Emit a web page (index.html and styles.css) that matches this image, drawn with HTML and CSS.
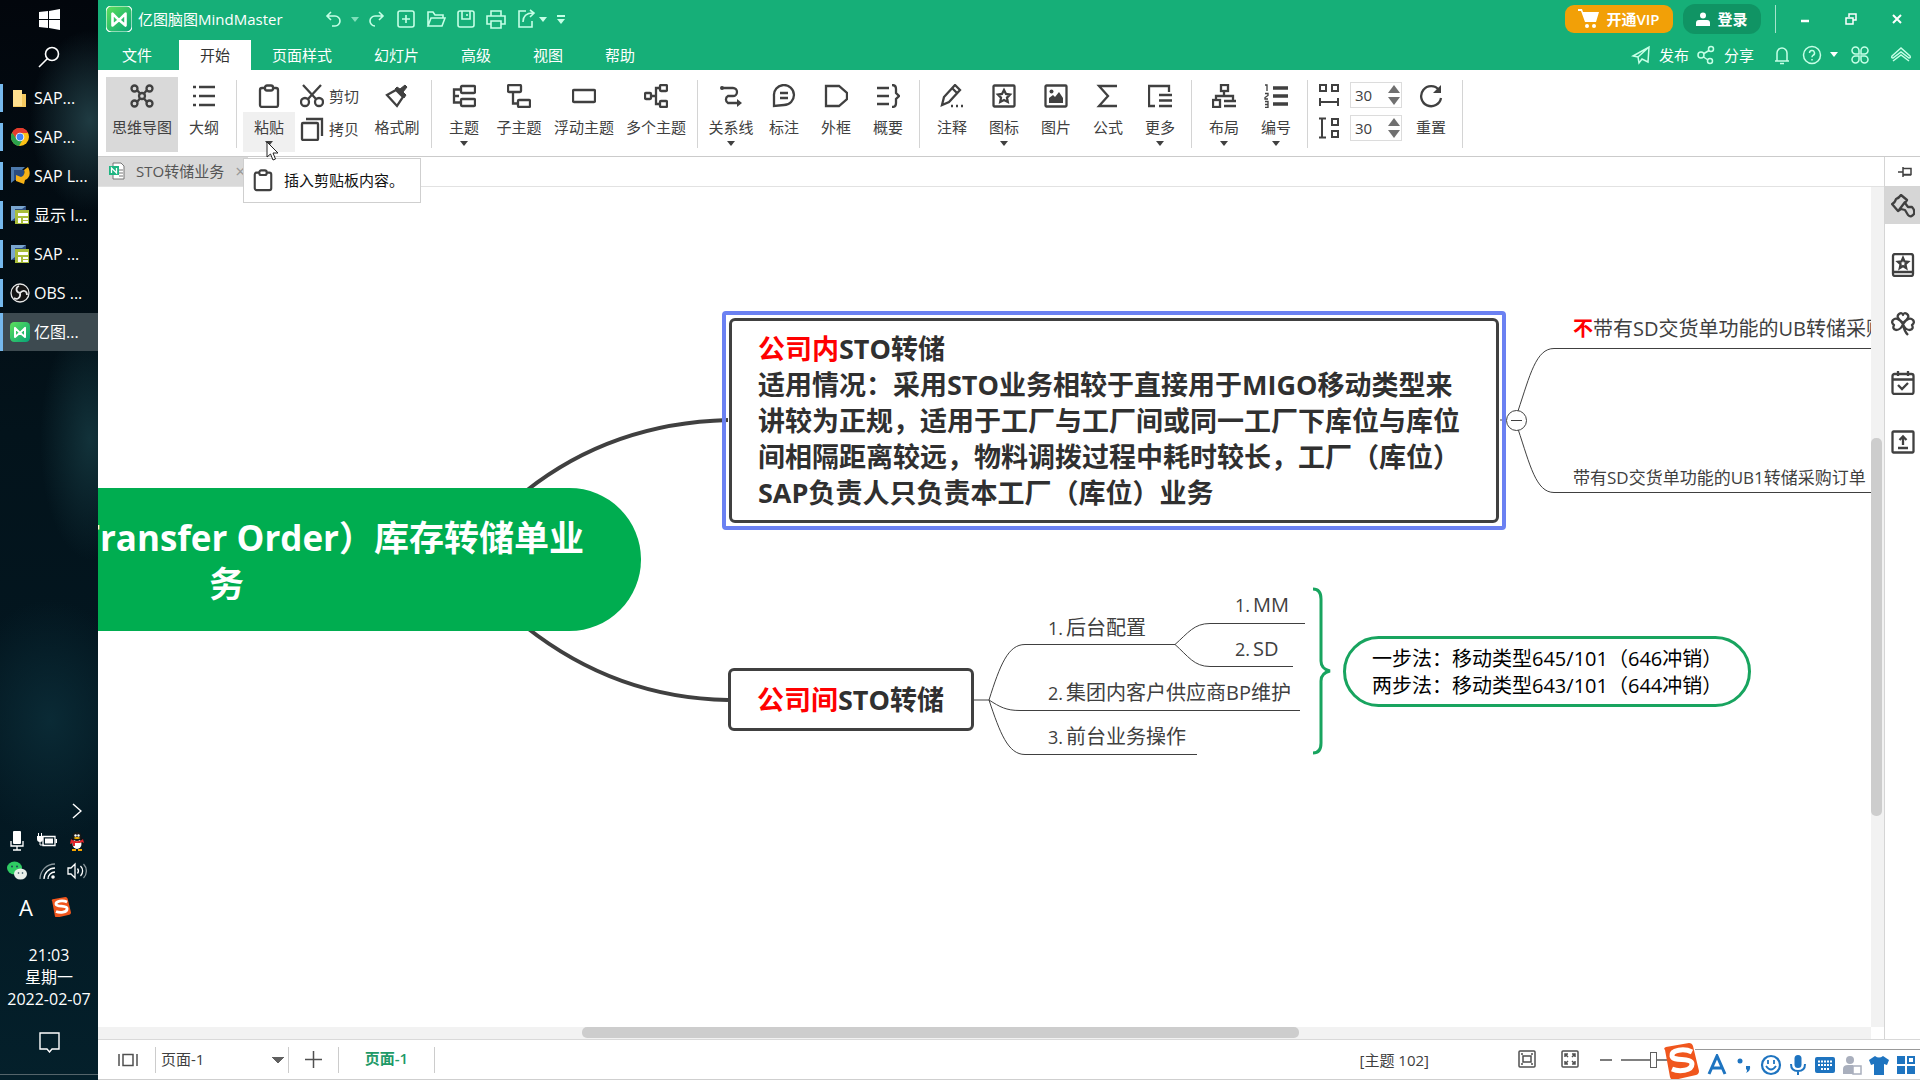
FILE: index.html
```html
<!DOCTYPE html>
<html lang="zh-CN">
<head>
<meta charset="utf-8">
<title>亿图脑图MindMaster</title>
<meta name="viewport" content="width=device-width, initial-scale=1">
<link rel="stylesheet" href="styles.css">
</head>
<body>
<svg class="defs" aria-hidden="true">
  <defs>
    <linearGradient id="logo-bg" x1="0" y1="0" x2="1" y2="1"><stop offset="0" stop-color="#5ee05a"/><stop offset="1" stop-color="#05a378"/></linearGradient>
    <symbol id="logo" viewBox="0 0 24 24"><rect width="24" height="24" rx="5" fill="url(#logo-bg)"/><path d="M6 7v11l6-5 6 5V7l-6 6z" fill="none" stroke="#fff" stroke-width="2.4" stroke-linejoin="round"/></symbol>
    <symbol id="sogou" viewBox="0 0 36 36"><path d="M2 7q-2-2 1-3L26 0q3 0 4 3l6 25q0 3-3 4l-22 5q-3 0-4-3z" fill="#f0561d"/><path d="M29 9C21 5 8 7 9 13c1 6 20 1 20 8 0 7-13 8-20 5" fill="none" stroke="#fff" stroke-width="5"/></symbol>
    <symbol id="clipboard" viewBox="0 0 24 24"><rect x="3" y="4" width="18" height="19" rx="2"/><rect x="8" y="1.500" width="8" height="5" rx="2" fill="#fff"/></symbol>
    <symbol id="sapgui" viewBox="0 0 20 20"><rect x="1" y="1" width="15" height="15" fill="#2c4a7c"/><path d="M1 1h15l-4 3H5v9l-4 3z" fill="#7aa6cf"/><rect x="5" y="5" width="14" height="14" fill="#a9bd3a"/><path d="M8 8h10v3H8zM8 13h3v5H8zM13 13h5v2h-5zM13 16h5v2h-5z" fill="#fff"/></symbol>
  </defs>
</svg>
<div class="desktop">
  <nav class="taskbar" aria-label="任务栏">
    <button class="tb-btn" aria-label="开始菜单"><svg width="21" height="21" viewBox="0 0 21 21" fill="#fff"><path d="M0 3l9-1v8H0zM10 2l11-2v10H10zM0 11h9v8l-9-1zM10 11h11v10l-11-2z"/></svg></button>
    <button class="tb-btn" aria-label="搜索"><svg width="22" height="22" viewBox="0 0 22 22" fill="none" stroke="#fff" stroke-width="1.600"><circle cx="14" cy="8" r="6.500"/><path d="M9.500 12.500L1 21"/></svg></button>
    <div class="tasks">
      <button class="task"><svg width="20" height="20" viewBox="0 0 20 20"><path d="M3 2h9v4h4v13H3z" fill="#f5c95f"/><path d="M3 2h9v16H3z" fill="#ffe08f"/></svg>SAP...</button>
      <button class="task"><svg width="20" height="20" viewBox="0 0 20 20"><circle cx="10" cy="10" r="9" fill="#fbc116"/><path d="M2.200 5.500A9 9 0 0 1 18 6H10z" fill="#e33b2e"/><path d="M2.200 5.500A9 9 0 0 0 9 19l4-7-6 0z" fill="#2ba24c"/><path d="M2.200 5.500L6.500 12 10 6h8A9 9 0 0 0 2.200 5.500z" fill="#e33b2e"/><circle cx="10" cy="10" r="4.300" fill="#fff"/><circle cx="10" cy="10" r="3.400" fill="#4285f4"/></svg>SAP...</button>
      <button class="task"><svg width="20" height="20" viewBox="0 0 20 20"><path d="M1 1h14l-4 4H6v8l-5 4z" fill="#4c79ac"/><rect x="4" y="4" width="10" height="10" fill="#2a4c80"/><path d="M6 9l5 2c3-1 4-4 3-7l4-3c3 6 2 11-3 13l-1 4-8-3z" fill="#f7b217"/></svg>SAP L...</button>
      <button class="task"><svg width="20" height="20"><use href="#sapgui"/></svg>显示 I...</button>
      <button class="task"><svg width="20" height="20"><use href="#sapgui"/></svg>SAP ...</button>
      <button class="task"><svg width="20" height="20" viewBox="0 0 20 20" fill="none" stroke="#e8e8e8"><circle cx="10" cy="10" r="9" fill="#141414" stroke-width="1.300"/><path d="M10 10C5 9 6 4 9 3M10 10c3-4 7-2 7 2M10 10c1 5-3 7-6 5" stroke-width="1.800"/></svg>OBS ...</button>
      <button class="task active"><svg width="20" height="20"><use href="#logo"/></svg>亿图...</button>
    </div>
    <div class="tray">
      <button class="tray-more" aria-label="显示隐藏的图标"><svg width="10" height="16" viewBox="0 0 10 16" fill="none" stroke="#fff" stroke-width="1.500"><path d="M1 1l8 7-8 7"/></svg></button>
      <div class="tray-grid">
        <svg viewBox="0 0 20 20" fill="#fff"><rect x="6" y="0" width="8" height="13" rx="1"/><path d="M4 10v5h12v-5M10 15v4M6 19h8" fill="none" stroke="#fff" stroke-width="1.300"/></svg>
        <svg viewBox="0 0 20 20" fill="#fff"><path d="M6 5.500h12v9H6z" fill="none" stroke="#fff" stroke-width="1.300"/><path d="M8 7.500h8v5H8zM18.500 8h1.500v4h-1.500zM0 5h6v3a3 3 0 0 1-6 0zM1 2h1v3H1zM4 2h1v3H4z"/><path d="M3 10v4h4" fill="none" stroke="#fff"/></svg>
        <svg viewBox="0 0 20 20"><ellipse cx="10" cy="11" rx="6" ry="7" fill="#111"/><ellipse cx="10" cy="13" rx="4.500" ry="5" fill="#fff"/><circle cx="10" cy="5.500" r="4.500" fill="#181818"/><circle cx="8.500" cy="4.500" r="1.200" fill="#fff"/><circle cx="11.500" cy="4.500" r="1.200" fill="#fff"/><ellipse cx="10" cy="7" rx="3" ry="1" fill="#f7b500"/><path d="M4 8c3 3 9 3 12 0l1 4-2-1-2 1H8v3H6v-3l-3 1z" fill="#e2242b"/><path d="M5 18h4v2H5zM11 18h4v2h-4z" fill="#f7a500"/></svg>
        <svg viewBox="0 0 20 20"><ellipse cx="7.500" cy="7" rx="7.500" ry="6.500" fill="#2fcb63"/><ellipse cx="13.500" cy="13" rx="6.500" ry="5.500" fill="#e9efe9"/><g fill="#245"><circle cx="5" cy="5.500" r="1"/><circle cx="10" cy="5.500" r="1"/><circle cx="11.500" cy="12" r=".8"/><circle cx="15.500" cy="12" r=".8"/></g></svg>
        <svg viewBox="0 0 20 20" fill="none" stroke="#fff" stroke-width="1.300"><path d="M3 18A15 15 0 0 1 18 3" stroke="#8a969b"/><path d="M7 18A11 11 0 0 1 18 7M11 18a7 7 0 0 1 7-7"/><circle cx="16" cy="16" r="1.800" fill="#fff" stroke="none"/></svg>
        <svg viewBox="0 0 20 20" fill="none" stroke="#fff" stroke-width="1.300"><path d="M1 7h3l4-4v14l-4-4H1zM10.500 7.500a4 4 0 0 1 0 5M13.500 5a7 7 0 0 1 0 10"/><path d="M16.500 3a10 10 0 0 1 0 14" stroke="#8a969b"/></svg>
      </div>
      <div class="tray-ime"><span>A</span><svg width="20" height="20"><use href="#sogou"/></svg></div>
      <div class="clock"><span>21:03</span><span>星期一</span><span>2022-02-07</span></div>
      <button class="tb-note" aria-label="通知"><svg width="21" height="21" viewBox="0 0 21 21" fill="none" stroke="#fff" stroke-width="1.400"><path d="M1 1h19v16h-7l-2.500 3L8 17H1z"/></svg></button>
    </div>
  </nav>

  <div class="app">
    <header class="head">
      <div class="title-row">
        <svg class="app-logo" width="26" height="26"><use href="#logo"/></svg>
        <h1>亿图脑图MindMaster</h1>
        <div class="quick">
          <button aria-label="撤销"><svg viewBox="0 0 20 20"><path d="M7 3L3 7l4 4M3 7h8a5 5 0 0 1 0 10H8"/></svg></button>
          <button class="slim dim" aria-label="撤销列表"><i class="caret"></i></button>
          <button aria-label="重做"><svg viewBox="0 0 20 20"><path d="M13 3l4 4-4 4M17 7H9a5 5 0 0 0 0 10"/></svg></button>
          <button aria-label="新建"><svg viewBox="0 0 20 20"><rect x="2" y="2" width="16" height="16" rx="2"/><path d="M10 6v8M6 10h8"/></svg></button>
          <button aria-label="打开"><svg viewBox="0 0 20 20"><path d="M2 17V3h5l2 3h8v3M2 17h14l3-8H5z"/></svg></button>
          <button aria-label="保存"><svg viewBox="0 0 20 20"><rect x="2" y="2" width="16" height="16" rx="2"/><path d="M6 2v8h8V2M11 5v2"/></svg></button>
          <button aria-label="打印"><svg viewBox="0 0 20 20"><path d="M5 7V2h10v5M5 15H1V7h18v8h-4M5 12h10v7H5z"/></svg></button>
          <button aria-label="导出"><svg viewBox="0 0 20 20"><path d="M10 2H3v16h13v-6M7 13c0-6 4-9 10-9M14 1l4 3-4 4"/></svg></button>
          <button class="slim near" aria-label="导出列表"><i class="caret"></i></button>
          <button class="slim more" aria-label="自定义"><i class="bar"></i><i class="caret"></i></button>
        </div>
        <div class="window-side">
          <button class="vip"><svg width="22" height="22" viewBox="0 0 22 22" fill="#fff"><path d="M0 1h4l1 3h16l-3 10H7L3 3H0z"/><circle cx="9" cy="18" r="2"/><circle cx="16" cy="18" r="2"/></svg>开通VIP</button>
          <button class="login"><svg width="14" height="14" viewBox="0 0 14 14" fill="#fff"><circle cx="7" cy="3.500" r="3"/><path d="M0 14v-3q0-3 3-3h8q3 0 3 3v3z"/></svg>登录</button>
          <div class="win-ctl">
            <button aria-label="最小化"><svg viewBox="0 0 12 12"><path d="M2 8h8" stroke-width="2.500"/></svg></button>
            <button aria-label="还原"><svg viewBox="0 0 12 12"><path d="M4 4V1h7v6H8M1 5h7v6H1z" stroke-width="1.500"/></svg></button>
            <button aria-label="关闭"><svg viewBox="0 0 12 12"><path d="M2 2l8 8M10 2l-8 8" stroke-width="2"/></svg></button>
          </div>
        </div>
      </div>
      <div class="menu-row">
        <nav class="menu">
          <button class="file">文件</button><button class="on">开始</button><button>页面样式</button><button>幻灯片</button><button>高级</button><button>视图</button><button>帮助</button>
        </nav>
        <div class="actions">
          <button><svg viewBox="0 0 20 20"><path d="M2 11L18 2l-1 15-6-3-3 4-1-6zM2 11l5 1 11-10"/></svg>发布</button>
          <button><svg viewBox="0 0 20 20"><circle cx="5" cy="10" r="3"/><circle cx="15" cy="4" r="2.500"/><circle cx="14" cy="16" r="2.500"/><path d="M8 8.500l5-3M7.500 12l4.500 3"/></svg>分享</button>
          <button class="bell" aria-label="通知"><svg viewBox="0 0 20 20"><path d="M3 16h14M5 16V8a5 5 0 0 1 10 0v8M8 18.500h4"/></svg></button>
          <button class="help" aria-label="帮助"><svg viewBox="0 0 20 20"><circle cx="10" cy="10" r="8.500"/><path d="M7.500 8a2.500 2.500 0 1 1 3.500 2.300q-1 .5-1 2M10 14v1.500"/></svg><i class="caret"></i></button>
          <button class="grid" aria-label="应用"><svg viewBox="0 0 20 20"><path d="M9 9H5.500A3.500 3.500 0 1 1 9 5.500zM11 9V5.500A3.500 3.500 0 1 1 14.500 9zM9 11v3.500A3.500 3.500 0 1 1 5.500 11zM11 11h3.500a3.500 3.500 0 1 1-3.500 3.500z"/></svg></button>
          <button class="fold" aria-label="收起功能区"><svg viewBox="0 0 22 20"><path d="M2 11l9-8 9 8q1 2-1 2l-8-6-8 6q-2 0-1-2zM3 16l8-6 8 6"/></svg></button>
        </div>
      </div>
    </header>

    <section class="ribbon" aria-label="功能区">
      <div class="group first">
        <button class="tool wide picked"><svg viewBox="0 0 24 24"><circle cx="4.500" cy="4.500" r="3"/><circle cx="19.500" cy="4.500" r="3"/><circle cx="4.500" cy="19.500" r="3"/><circle cx="19.500" cy="19.500" r="3"/><circle cx="12" cy="12" r="3"/><path d="M7 6l3 3.500M17 6l-3 3.500M7 18l3-3.500M17 18l-3-3.500"/></svg>思维导图</button>
        <button class="tool"><svg viewBox="0 0 24 24"><path d="M7 3h16M7 12h16M7 21h16M1 3h3M1 12h3M1 21h3"/></svg>大纲</button>
      </div>
      <div class="group">
        <button class="tool paste"><svg><use href="#clipboard"/></svg><span>粘贴</span><i class="caret"></i></button>
        <div class="stack">
          <button><svg viewBox="0 0 24 24"><circle cx="5" cy="18" r="4"/><circle cx="19" cy="18" r="4"/><path d="M3 1l13 14M21 1L8 15"/></svg>剪切</button>
          <button><svg viewBox="0 0 24 24"><rect x="2" y="6" width="16" height="17" rx="1"/><path d="M6 2h16v17"/></svg>拷贝</button>
        </div>
        <button class="tool mid"><svg viewBox="0 0 24 24"><path d="M11 6l7 7-6 9L2 11z"/><path d="M10 5l9 9 2-3-3-3 4-5-2-2-5 4-3-2z" fill="#404040" stroke-width="1"/></svg>格式刷</button>
      </div>
      <div class="group">
        <button class="tool"><svg viewBox="0 0 24 24"><rect x="9" y="2" width="14" height="7" rx="1"/><rect x="9" y="15" width="14" height="7" rx="1"/><path d="M9 5.500H2v13h7M2 12h5"/></svg>主题<i class="caret"></i></button>
        <button class="tool mid"><svg viewBox="0 0 24 24"><rect x="1" y="1" width="13" height="7" rx="1"/><rect x="11" y="16" width="12" height="7" rx="1"/><path d="M6 8v11.500h5"/></svg>子主题</button>
        <button class="tool wide"><svg viewBox="0 0 24 24"><rect x="1" y="6" width="22" height="12" rx="1"/></svg>浮动主题</button>
        <button class="tool wide"><svg viewBox="0 0 24 24"><rect x="1" y="9" width="6" height="6" rx="1"/><rect x="16" y="1" width="7" height="6" rx="1"/><rect x="16" y="17" width="7" height="6" rx="1"/><path d="M16 4h-4v16h4M7 12h5"/></svg>多个主题</button>
      </div>
      <div class="group">
        <button class="tool mid54"><svg viewBox="0 0 24 24"><path d="M2 4h12a4 4 0 0 1 0 8H9a4 4 0 0 0 0 7h11"/><circle cx="3" cy="4" r="2" fill="#404040" stroke="none"/><path d="M18 15l5 4-5 4z" fill="#404040" stroke="none"/></svg>关系线<i class="caret"></i></button>
        <button class="tool"><svg viewBox="0 0 24 24"><path d="M2 22V12A10 10 0 1 1 12 21z"/><path d="M8 9h8M8 14h8"/></svg>标注</button>
        <button class="tool"><svg viewBox="0 0 24 24"><path d="M2 2h13l8 7v6l-8 7H2z"/></svg>外框</button>
        <button class="tool"><svg viewBox="0 0 24 24"><path d="M1 4h12M1 12h12M1 20h12M16 1q4 0 4 4v4l3 3-3 3v4q0 4-4 4"/></svg>概要</button>
      </div>
      <div class="group">
        <button class="tool"><svg viewBox="0 0 24 24"><path d="M2 21l2-8L15 1l5 5L9 18zM12 4l5 5"/><path d="M11 22h2M16 22h2M21 22h2"/></svg>注释</button>
        <button class="tool"><svg viewBox="0 0 24 24"><rect x="1.500" y="1.500" width="21" height="21" rx="1"/><path d="M12 6l2 4 4 .6-3 3 .8 4.400L12 16l-3.800 2 .8-4.400-3-3L10 10z"/></svg>图标<i class="caret"></i></button>
        <button class="tool"><svg viewBox="0 0 24 24"><rect x="1.500" y="1.500" width="21" height="21" rx="1"/><circle cx="7.500" cy="7.500" r="2" fill="#404040" stroke="none"/><path d="M5 19v-5l4-3 2 2 4-5 4 6v5z" fill="#404040" stroke="none"/></svg>图片</button>
        <button class="tool"><svg viewBox="0 0 24 24"><path d="M21 2H3l9 10-9 10h18"/></svg>公式</button>
        <button class="tool"><svg viewBox="0 0 24 24"><path d="M7 22H1V2h20v6M11 11h13M11 16.500h13M11 22h13"/></svg>更多<i class="caret"></i></button>
      </div>
      <div class="group">
        <button class="tool"><svg viewBox="0 0 24 24"><rect x="9" y="1" width="7" height="6"/><path d="M12 7v5M4 16v-4h17v4"/><rect x="1" y="16" width="7" height="7"/><path d="M12 17h12M12 22h12"/></svg>布局<i class="caret"></i></button>
        <button class="tool"><svg viewBox="0 0 24 24"><path d="M9 4h15M9 12h15M9 20h15" stroke-width="3.500"/><path d="M1 1h2v6M1 9.500h3v2l-3 2v1.500h3M1 17.500h3v6H1M1 20.500h3" stroke-width="1.300"/></svg>编号<i class="caret"></i></button>
      </div>
      <div class="group spins">
        <div class="spin-col">
          <label class="spin"><svg viewBox="0 0 22 22"><rect x="2" y="1" width="6" height="6"/><rect x="14" y="1" width="6" height="6"/><path d="M1 18h20M2 14v8M20 14v8"/></svg><span class="spin-box"><input value="30" aria-label="水平间距"><i class="up"></i><i class="down"></i></span></label>
          <label class="spin"><svg viewBox="0 0 22 22"><rect x="14" y="2" width="6" height="6"/><rect x="14" y="14" width="6" height="6"/><path d="M4 1v20M1 1.500h7M1 20.500h7"/></svg><span class="spin-box"><input value="30" aria-label="垂直间距"><i class="up"></i><i class="down"></i></span></label>
        </div>
        <button class="tool"><svg viewBox="0 0 24 24"><path d="M22 14A10 10 0 1 1 20 6"/><path d="M22 1v8h-8z" fill="#404040" stroke="none"/></svg>重置</button>
      </div>
    </section>

    <main class="work">
      <div class="doc">
        <div class="doc-tabs">
          <button class="doc-tab"><svg width="16" height="18" viewBox="0 0 16 18"><path d="M4 1h8l3 3v13H4z" fill="#fff" stroke="#777"/><path d="M10 8h4M10 11h4M10 14h4" stroke="#777"/><rect x="0" y="4" width="10" height="9" fill="#1fb582"/><path d="M2.500 11V6l5 5V6" fill="none" stroke="#fff" stroke-width="1.300"/></svg>STO转储业务<span class="x">×</span></button>
          <div class="tip" role="tooltip"><svg width="22" height="24" class="line-icon"><use href="#clipboard"/></svg>插入剪贴板内容。</div>
          <svg class="pointer" width="14" height="20" viewBox="0 0 14 20"><path d="M1 1v15l3.500-3 2.500 6 2.500-1-2.500-6h5z" fill="#fff" stroke="#222"/></svg>
        </div>
        <div class="canvas-wrap">
          <div class="canvas">
            <svg class="links" fill="none" stroke="#404040">
              <path d="M428 304Q514 236 630 233M428 440Q518 511 630 513" stroke-width="4"/>
              <g stroke-width="1">
                <path d="M1402 233h6M1420 224C1432 188 1438 161.500 1456 161.500H1800M1420 242C1432 278 1438 305.500 1456 305.500H1800"/>
                <path d="M876 513h15M891 513C902 478 910 457.500 927 457.500H1077M891 513C902 520 908 523.500 922 523.500H1202M891 513C902 546 910 567.500 927 567.500H1099"/>
                <path d="M1077 457.500C1090 446 1096 436.500 1112 436.500H1207M1077 457.500C1090 469 1096 479.500 1112 479.500H1195"/>
              </g>
              <path d="M1215 402q8 0 8 10v62q0 8 9 10q-9 2-9 10v62q0 10-8 10" stroke="#18a45f" stroke-width="3"/>
            </svg>
            <div class="node root"><span class="r1">Transfer Order）库存转储单业</span><span class="r2">务</span></div>
            <div class="node selected"><div class="box big"><p><em>公司内</em>STO转储</p><p>适用情况：采用STO业务相较于直接用于MIGO移动类型来</p><p>讲较为正规，适用于工厂与工厂间或同一工厂下库位与库位</p><p>间相隔距离较远，物料调拨过程中耗时较长，工厂（库位）</p><p>SAP负责人只负责本工厂（库位）业务</p></div></div>
            <div class="node box inter"><em>公司间</em>STO转储</div>
            <button class="node collapse" aria-label="收起"></button>
            <div class="node leaf n-ub"><em>不</em>带有SD交货单功能的UB转储采购</div>
            <div class="node leaf small n-ub1">带有SD交货单功能的UB1转储采购订单</div>
            <div class="node leaf n-1"><b>1.</b>后台配置</div>
            <div class="node leaf n-2"><b>2.</b>集团内客户供应商BP维护</div>
            <div class="node leaf n-3"><b>3.</b>前台业务操作</div>
            <div class="node leaf n-mm"><b>1.</b>MM</div>
            <div class="node leaf n-sd"><b>2.</b>SD</div>
            <div class="node pill">一步法：移动类型645/101（646冲销）<br>两步法：移动类型643/101（644冲销）</div>
          </div>
          <div class="vbar"><i></i></div>
          <div class="hbar"><i></i></div>
        </div>
      </div>
      <aside class="side">
        <button class="pin" aria-label="固定"><svg width="14" height="12" viewBox="0 0 14 12"><path d="M0 6h5M5 1v10M5 2.500h8v6H5M5 9h8"/></svg></button>
        <button class="on" aria-label="样式"><svg viewBox="0 0 24 24"><path d="M10 1l6 5-2 3 3 4h4q3 3 2 7-3 4-6 1l-3-5-4-1-3 2-6-7q3-1 4-5 3-1 5-4zM14 8l-6 8" stroke-linejoin="round"/></svg></button>
        <button aria-label="图标"><svg viewBox="0 0 24 24"><rect x="2" y="1" width="20" height="22" rx="2"/><path d="M2 19h20M12 5l1.500 3.500 3.500.3-2.600 2.400.8 3.800-3.200-2-3.200 2 .8-3.800L7 8.800l3.500-.3z"/></svg></button>
        <button aria-label="剪贴画"><svg viewBox="0 0 24 24"><path d="M12 11Q4 5 8 2q3-2 4 1 1-3 4-1 4 3-4 9zM12 12Q6 4 2 8q-2 3 1 5-2 4 2 5 5 0 7-6zM12 12q6-8 10-4 2 3-1 5 2 4-2 5-5 0-7-6zM12 12q1 7 5 11" stroke-linejoin="round"/></svg></button>
        <button aria-label="任务"><svg viewBox="0 0 24 24"><rect x="1.500" y="3" width="21" height="20" rx="2"/><path d="M1.500 8.500h21M7 0v5M17 0v5M7 14l4 4 6-6"/></svg></button>
        <button aria-label="导出"><svg viewBox="0 0 24 24"><rect x="1.500" y="1.500" width="21" height="21" rx="1"/><path d="M12 15V7M8.500 10L12 6.500l3.500 3.500M7 18h10"/></svg></button>
      </aside>
    </main>

    <footer class="status">
      <button class="pages" aria-label="页面列表"><svg width="20" height="14" viewBox="0 0 20 14"><path d="M1 1v12M19 1v12M5 1.500h10v11H5z"/></svg></button>
      <select aria-label="页面"><option>页面-1</option></select>
      <button class="plus" aria-label="新建页面"><svg width="17" height="17" viewBox="0 0 17 17"><path d="M8.500 0v17M0 8.500h17"/></svg></button>
      <button class="page-tab">页面-1</button>
      <span class="count">[主题 102]</span>
      <button class="view" aria-label="适合页面"><svg width="18" height="18" viewBox="0 0 18 18"><rect x="1" y="1" width="16" height="16" rx="1"/><rect x="5" y="6" width="8" height="6"/><path d="M3 4h2M13 4h2M3 14h2M13 14h2"/></svg></button>
      <button class="view last" aria-label="全屏"><svg width="18" height="18" viewBox="0 0 18 18"><rect x="1" y="1" width="16" height="16" rx="1"/><path d="M4 7V4h3M4 4l3 3M11 4h3v3M14 4l-3 3M4 11v3h3M4 14l3-3M11 14h3v-3M14 14l-3-3"/></svg></button>
      <button class="minus" aria-label="缩小"><svg width="12" height="2" viewBox="0 0 12 2"><path d="M0 1h12"/></svg></button>
      <input class="zoom" type="range" min="0" max="100" value="38" aria-label="缩放">
      <div class="ime">
        <svg width="36" height="36"><use href="#sogou"/></svg>
        <div class="ime-bar">
          <svg viewBox="0 0 22 22"><path d="M3 20l8-18 8 18M6 14h10" fill="none" stroke-width="3"/></svg>
          <svg viewBox="0 0 22 22"><circle cx="7" cy="7" r="2.500" stroke="none"/><path d="M13 12h4q1 5-4 7 2-3 0-4z" stroke="none"/></svg>
          <svg viewBox="0 0 22 22"><circle cx="11" cy="11" r="9" fill="none" stroke-width="2.200"/><path d="M8 6v4M14 6v4M6 12q5 7 10 0" fill="none" stroke-width="1.800"/></svg>
          <svg viewBox="0 0 22 22"><rect x="7.500" y="1" width="7" height="13" rx="3.500" stroke="none"/><path d="M4 10q0 7 7 7t7-7M11 17v4" fill="none" stroke-width="2"/></svg>
          <svg viewBox="0 0 22 22"><rect x="1" y="3" width="20" height="16" rx="2" stroke="none"/><path d="M4 7.500h14M4 11h14M7 15h8" stroke="#fff" stroke-width="2" stroke-dasharray="2 1"/></svg>
          <svg viewBox="0 0 22 22" class="faded"><circle cx="9" cy="6" r="4" stroke="none"/><path d="M2 20v-5q0-4 5-4h5v9z" stroke="none"/><rect x="12" y="12" width="8" height="8" fill="#fff" stroke-width="1.500"/></svg>
          <svg viewBox="0 0 22 22"><path d="M7 2q4 3 8 0l6 4-2 5-3-1v11H6V10l-3 1-2-5z" stroke="none"/></svg>
          <svg viewBox="0 0 22 22"><path d="M2 2h8v8H2zM2 12h8v8H2zM12 12h8v8h-8z" stroke="none"/><rect x="13" y="3" width="6" height="6" fill="none" stroke-width="2"/></svg>
        </div>
      </div>
    </footer>
  </div>
</div>
</body>
</html>
```

FILE: styles.css
```css
* { box-sizing: border-box; }
body { margin: 0; font: 15px/20px "Open Sans", "Noto Sans CJK SC", sans-serif; color: #404040; background: #fff; }
button { border: 0; padding: 0; margin: 0; background: none; font: inherit; color: inherit; display: flex; align-items: center; justify-content: center; white-space: nowrap; }
em { font-style: normal; color: #f00; }
p, h1 { margin: 0; }
.defs { position: absolute; width: 0; height: 0; }
.desktop { display: flex; height: 100vh; overflow: hidden; }
.caret { display: block; border: 4px solid transparent; border-top: 5px solid currentColor; border-bottom: 0; }

/* system taskbar */
.taskbar { flex: 0 0 98px; display: flex; flex-direction: column; color: #fff; font-size: 16px; overflow: hidden;
  background: radial-gradient(ellipse 60px 90px at 90px 120px, #1f3b42, transparent), radial-gradient(ellipse 50px 120px at 90px 440px, #12323a, transparent), radial-gradient(ellipse 90px 120px at 50px 720px, #0a2a35, transparent), linear-gradient(#02060c, #03131b 40%, #031822 75%, #04202b); }
.tb-btn { height: 38px; }
.tasks { display: flex; flex-direction: column; gap: 1px; padding-top: 3px; }
.task { height: 38px; justify-content: flex-start; gap: 4px; padding-left: 7px; border-left: 3px solid transparent; background: linear-gradient(#76b9ed, #76b9ed) left center / 3px 28px no-repeat border-box; }
.task.active { background: linear-gradient(#76b9ed, #76b9ed) left center / 3px 38px no-repeat border-box, #3d4a50; }
.tray { margin-top: auto; display: flex; flex-direction: column; }
.tray-more { height: 30px; justify-content: flex-end; padding-right: 16px; }
.tray-grid { display: grid; grid-template-columns: 20px 20px 20px; gap: 10px; justify-content: center; padding: 5px 4px 0 0; }
.tray-grid svg { width: 20px; height: 20px; }
.tray-ime { display: flex; align-items: center; justify-content: center; gap: 18px; padding: 14px 8px 0 0; }
.tray-ime span { font-size: 22px; line-height: 24px; }
.clock { display: flex; flex-direction: column; align-items: center; line-height: 22px; padding-top: 25px; }
.tb-note { height: 65px; border-bottom: 1px solid #55656b; margin-bottom: 5px; }

/* application header */
.app { flex: 1; min-width: 0; display: flex; flex-direction: column; }
.head { background: #16af78; color: #fff; }
.head svg { fill: none; stroke: currentColor; }
.title-row { height: 40px; display: flex; align-items: center; padding: 0 0 2px 8px; }
.app-logo { margin-right: 6px; }
h1 { font-size: 15px; font-weight: 400; flex: 0 0 181px; }
.quick { display: flex; color: #c5ffe6; }
.quick button { width: 30px; height: 30px; }
.quick .slim { width: 12px; }
.quick .near { margin-left: -4px; }
.quick .dim { opacity: .6; }
.quick .more { flex-direction: column; gap: 2px; margin-left: 6px; }
.bar { width: 8px; height: 2px; background: currentColor; }
.quick svg { width: 20px; height: 20px; stroke-width: 1.600; }
.window-side { margin-left: auto; display: flex; align-items: center; gap: 10px; font-weight: 600; }
.window-side .vip { width: 108px; height: 28px; border-radius: 9px; background: #f2a007; gap: 6px; }
.window-side .login { width: 78px; height: 30px; border-radius: 12px; background: #109464; gap: 7px; }
.window-side .vip svg, .window-side .login svg { fill: #fff; stroke: none; }
.win-ctl { display: flex; border-left: 1px solid #a6e3cc; margin-left: 4px; padding-left: 6px; height: 28px; }
.win-ctl button { width: 46px; }
.win-ctl svg { width: 12px; height: 12px; }
.menu-row { height: 30px; display: flex; }
.menu, .actions { display: flex; }
.menu button { padding: 0 21px 1px; }
.menu .file { padding: 0 27px 1px 24px; }
.menu .on { background: #fff; color: #333; }
.actions { margin-left: auto; align-items: center; padding: 0 7px 1px 0; }
.actions button { gap: 8px; margin-right: 7px; }
.actions svg { width: 20px; height: 20px; stroke-width: 1.500; color: #c5ffe6; }
.actions .bell { margin: 0 10px 0 11px; }
.actions .help { margin-right: 12px; }
.actions .grid { margin-right: 19px; }
.actions .fold { margin-right: 0; }
.actions .fold svg { width: 24px; }

/* ribbon */
.ribbon { flex: none; display: flex; padding: 7px 0 4px 8px; height: 87px; border-bottom: 1px solid #cbcbcb; overflow: hidden; }
.group { display: flex; padding: 0 5px 0 6px; border-right: 1px solid transparent; background: linear-gradient(#d4d4d4, #d4d4d4) right 3px / 1px 68px no-repeat border-box; }
.group.first { padding: 0 6px 0 0; }
.tool { width: 52px; height: 75px; flex-direction: column; justify-content: flex-start; padding-top: 7px; line-height: 22px; }
.tool svg { width: 24px; height: 24px; margin-bottom: 8px; flex: none; }
.tool .caret { margin-top: 3px; }
.tool.wide { width: 72px; }
.tool.mid { width: 58px; }
.tool.mid54 { width: 54px; }
.picked { background: #d9d9d9; }
.paste { background: linear-gradient(transparent 35px, #f0f0f0 35px); }
.ribbon svg, .side svg, .line-icon { fill: none; stroke: #404040; stroke-width: 2.300; }
.stack { width: 73px; padding: 2px 0 0 5px; display: flex; flex-direction: column; }
.stack button { height: 33px; gap: 5px; justify-content: flex-start; }
.stack svg { width: 24px; height: 24px; }
.spins { padding-left: 10px; }
.spin-col { display: flex; flex-direction: column; gap: 7px; padding-top: 5px; margin-right: 3px; }
.spin { display: flex; align-items: center; gap: 10px; height: 26px; }
.spin svg { width: 22px; height: 22px; stroke-width: 2; }
.spin-box { width: 52px; height: 26px; border: 1px solid #dcdcdc; display: grid; grid-template: 1fr 1fr / 1fr 13px; align-items: center; }
.spin-box input { grid-row: 1 / 3; width: 32px; border: 0; padding: 0 0 0 4px; font: inherit; color: #404040; outline: 0; background: none; }
.up, .down { border: 6px solid transparent; border-top: 0; border-bottom: 8px solid #707070; width: 12px; }
.down { border-bottom: 0; border-top: 8px solid #707070; }

/* document area */
.work { flex: 1; min-height: 0; display: flex; }
.doc { flex: 1; min-width: 0; display: flex; flex-direction: column; }
.doc-tabs { height: 30px; position: relative; border-bottom: 1px solid #e2e2e2; display: flex; }
.doc-tab { width: 150px; background: #d9d9d9; gap: 11px; justify-content: flex-start; padding: 0 0 2px 11px; color: #555; }
.doc-tab .x { color: #999; font-size: 18px; }
.tip { position: absolute; z-index: 2; left: 145px; top: 1px; width: 178px; height: 45px; background: #fff; border: 1px solid #cfcfcf; color: #111; display: flex; align-items: center; gap: 10px; padding: 0 0 2px 8px; white-space: nowrap; }
.pointer { position: absolute; z-index: 3; left: 168px; top: -16px; }
.canvas-wrap { flex: 1; min-height: 0; display: grid; grid-template: 1fr 12px / 1fr 13px; }
.canvas { position: relative; overflow: hidden; }
.vbar, .hbar { background: #f2f2f2; }
.vbar { padding-right: 2px; }
.vbar i { display: block; height: 45%; margin-top: 251px; background: #cdcdcd; border-radius: 5px; }
.hbar { padding-left: 484px; }
.hbar i { display: block; width: 717px; height: 11px; background: #cdcdcd; border-radius: 5px; }
.side { flex: 0 0 36px; border-left: 1px solid #d5d5d5; display: flex; flex-direction: column; gap: 22px; }
.side button { height: 37px; }
.side svg { width: 24px; height: 24px; }
.side .pin { height: 30px; margin-bottom: -22px; border-bottom: 1px solid #d5d5d5; padding-left: 4px; }
.side .pin svg { width: 14px; height: 12px; stroke-width: 1.500; }
.side .on { background: #d6d6d6; }

/* mind map */
.links { position: absolute; width: 100%; height: 100%; }
.node { position: absolute; white-space: nowrap; }
.root { left: -288px; top: 301px; width: 831px; height: 143px; border-radius: 72px; background: #00ad50; color: #fff; font-size: 35px; line-height: 46px; font-weight: 700; padding: 27px 57px 0 0; }
.root span { display: block; }
.r1 { text-align: right; }
.r2 { text-align: center; padding-left: 59px; }
.box { border: 3px solid #404040; border-radius: 6px; background: #fff; font-size: 27px; line-height: 36px; font-weight: 700; color: #303030; }
.selected { left: 624px; top: 124px; border: 4px solid #6b81f2; border-radius: 4px; padding: 3px; }
.big { width: 770px; padding: 10px 26px 9px; }
.inter { left: 630px; top: 481px; width: 246px; height: 63px; padding: 11px 26px; }
.collapse { left: 1408px; top: 223px; width: 21px; height: 21px; border: 1px solid #404040; border-radius: 50%; background: #fff; }
.collapse::before { content: ""; width: 11px; height: 1px; background: #404040; }
.leaf { font-size: 20px; line-height: 28px; }
.leaf b { font-weight: 400; font-size: 18px; display: inline-block; width: 18px; }
.leaf em { font-weight: 700; }
.small { font-size: 17px; }
.n-ub { left: 1475px; top: 128px; }
.n-ub1 { left: 1475px; top: 277px; }
.n-1 { left: 950px; top: 427px; }
.n-2 { left: 950px; top: 492px; }
.n-3 { left: 950px; top: 536px; }
.n-mm { left: 1137px; top: 404px; }
.n-sd { left: 1137px; top: 448px; }
.pill { left: 1245px; top: 449px; width: 408px; height: 71px; border: 3px solid #18a45f; border-radius: 36px; padding: 6px 0 0 26px; font-size: 20px; line-height: 27px; color: #000; }

/* status bar */
.status { flex: 0 0 41px; border-top: 1px solid #d9d9d9; border-bottom: 1px solid #cfcfcf; display: flex; align-items: center; padding-left: 20px; }
.status > button svg { fill: none; stroke: #505050; stroke-width: 1.500; }
.pages { width: 38px; height: 26px; justify-content: flex-start; border-right: 1px solid #ccc; }
.status select { appearance: none; width: 133px; height: 26px; border: 0; border-right: 1px solid #ccc; border-radius: 0; font: inherit; color: #404040; padding: 0 0 1px 5px; background: linear-gradient(to bottom right, #606060 50%, transparent 50%) 122px 10px / 6px 7px no-repeat, linear-gradient(to bottom left, #606060 50%, transparent 50%) 116px 10px / 6px 7px no-repeat; }
.plus { width: 50px; height: 26px; border-right: 1px solid #ccc; }
.page-tab { width: 96px; height: 26px; border-right: 1px solid #ccc; color: #1f9a68; font-weight: 600; padding-bottom: 3px; }
.count { margin-left: auto; margin-right: 89px; }
.view { margin-right: 25px; padding-bottom: 1px; }
.view.last { margin-right: 21px; }
.minus { margin-right: 9px; }
.zoom { appearance: none; width: 84px; height: 18px; margin: 0 -42px 0 0; background: linear-gradient(#808080, #808080) center / 100% 2px no-repeat; }
.zoom::-webkit-slider-thumb { appearance: none; width: 7px; height: 16px; background: #fff; border: 1px solid #606060; }
.ime { display: flex; align-items: flex-end; height: 100%; position: relative; }
.ime > svg { flex: none; margin-right: -4px; z-index: 1; }
.ime-bar { display: flex; align-items: center; gap: 5px; height: 30px; padding: 0 3px 0 11px; border-top: 1px solid #999; background: #fff; }
.ime-bar svg { width: 22px; height: 22px; fill: #1e74c0; stroke: #1e74c0; }
.ime-bar .faded { fill: #a9afbd; stroke: #a9afbd; }
```
